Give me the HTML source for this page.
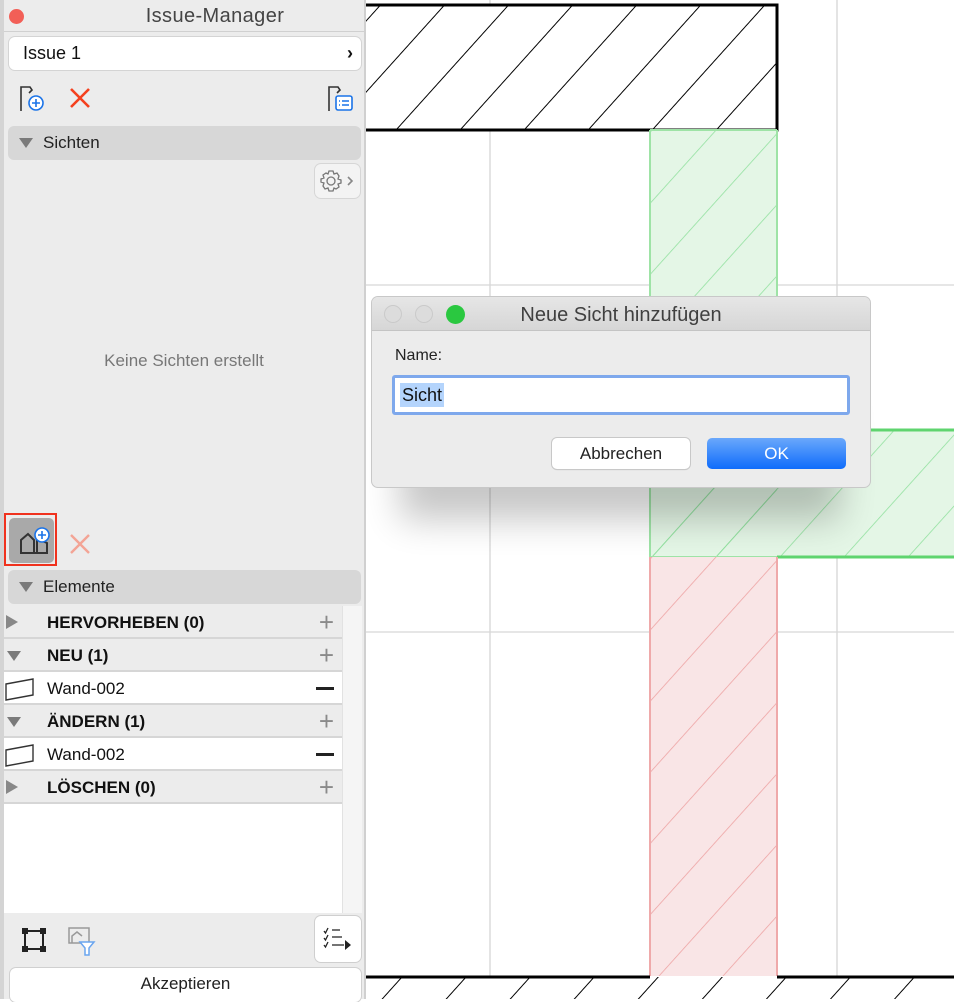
<!DOCTYPE html>
<html><head><meta charset="utf-8"><style>
*{margin:0;padding:0;box-sizing:border-box}
body{width:954px;height:999px;overflow:hidden;background:#fff;font-family:"Liberation Sans",sans-serif;position:relative}
.a{position:absolute}
.panel{left:0;top:0;width:366px;height:999px;background:#ececec;border-left:4px solid #d4d4d4;border-right:2px solid #d0d0d0}
.hdr{background:#d7d7d7;border-radius:6px;height:34px;font-size:17px;color:#222;line-height:34px}
.tri{display:inline-block;width:0;height:0;border-left:7px solid transparent;border-right:7px solid transparent;border-top:10px solid #7a7a7a}
.row{left:0;width:342px;height:33px;font-size:17px;line-height:33px;border-bottom:2px solid #d6d6d6}
.cat{background:#ececec;font-weight:bold;color:#111}
.item{background:#fff;color:#111}
.plus{position:absolute;right:12px;top:0;color:#8a8a8a;font-size:26px;font-weight:normal}
.minus{position:absolute;right:12px;top:15px;width:18px;height:2.5px;background:#222}
</style></head><body>
<svg class="a" style="left:0;top:0" width="954" height="999">
<defs>
<pattern id="pk" patternUnits="userSpaceOnUse" width="60" height="47.6" patternTransform="rotate(-48)"><line x1="0" y1="0" x2="60" y2="0" stroke="#000" stroke-width="2"/></pattern>
<pattern id="pg" patternUnits="userSpaceOnUse" width="60" height="47.6" patternTransform="rotate(-48)"><line x1="0" y1="0" x2="60" y2="0" stroke="#8ee09c" stroke-width="1.5"/></pattern>
<pattern id="pr" patternUnits="userSpaceOnUse" width="60" height="47.6" patternTransform="rotate(-48)"><line x1="0" y1="0" x2="60" y2="0" stroke="#eda0a0" stroke-width="1.5"/></pattern>
<filter id="bl" x="-20%" y="-20%" width="140%" height="160%"><feGaussianBlur stdDeviation="18"/></filter>
</defs>
<g stroke="#d6d6d6" stroke-width="1.3"><line x1="490" y1="0" x2="490" y2="976"/><line x1="837" y1="0" x2="837" y2="976"/><line x1="365" y1="285" x2="954" y2="285"/><line x1="365" y1="632" x2="954" y2="632"/></g>
<rect x="340" y="5" width="437" height="125" fill="#fff"/>
<rect x="340" y="5" width="437" height="125" fill="url(#pk)"/>
<path d="M340 5H777V130H340" fill="none" stroke="#000" stroke-width="3"/>
<rect x="650" y="130" width="127" height="427" fill="#e4f6e6"/>
<rect x="650" y="430" width="304" height="127" fill="#e4f6e6"/>
<rect x="650" y="130" width="127" height="427" fill="url(#pg)"/>
<rect x="650" y="430" width="304" height="127" fill="url(#pg)"/>
<path d="M650 130V557M777 130V430M650 130H777" stroke="#9ee3a6" stroke-width="2" fill="none"/>
<path d="M777 430H954M777 557H954" stroke="#5fd46f" stroke-width="3" fill="none"/>
<path d="M650 557H777" stroke="#9ee3a6" stroke-width="2"/>
<rect x="650" y="557" width="127" height="419" fill="#f9e5e6"/>
<rect x="650" y="557" width="127" height="419" fill="url(#pr)"/>
<path d="M650 557V976M777 557V976" stroke="#efa9aa" stroke-width="2"/>
<rect x="340" y="977" width="614" height="22" fill="url(#pk)"/>
<path d="M340 977H650M777 977H954" stroke="#000" stroke-width="3"/>
<rect x="400" y="400" width="440" height="120" fill="#000" opacity="0.22" filter="url(#bl)"/>
</svg>

<div class="a panel">
 <div class="a" style="left:0;top:0;width:360px;height:32px;border-bottom:1px solid #d0d0d0;text-align:center;font-size:20px;letter-spacing:0.4px;line-height:33px;color:#444;padding-left:62px">Issue-Manager</div>
 <div class="a" style="left:5px;top:9px;width:15px;height:15px;border-radius:50%;background:#f25f57"></div>
 <div class="a" style="left:5px;top:37px;width:352px;height:33px;background:#fff;border-radius:6px;box-shadow:0 0 0 1px #d4d4d4;font-size:18px;line-height:33px;padding-left:14px;color:#111">Issue 1<span style="position:absolute;right:8px;font-weight:bold">›</span></div>
 <svg class="a" style="left:14px;top:84px" width="32" height="28"><path d="M3 27V3H12L14 6 11 9" fill="none" stroke="#333" stroke-width="1.6"/><circle cx="18" cy="19" r="7" fill="#fff" stroke="#1a73e8" stroke-width="1.6"/><path d="M18 15V23M14 19H22" stroke="#1a73e8" stroke-width="1.6"/></svg>
 <svg class="a" style="left:64px;top:86px" width="24" height="24"><path d="M3 3L21 21M21 3L3 21" stroke="#f4401e" stroke-width="2.6"/></svg>
 <svg class="a" style="left:322px;top:84px" width="30" height="28"><path d="M3 27V3H12L14 6 11 9" fill="none" stroke="#333" stroke-width="1.6"/><rect x="10" y="12" width="16" height="14" rx="2" fill="#fff" stroke="#1a73e8" stroke-width="1.6"/><path d="M13 17H14M16 17H23M13 21H14M16 21H23" stroke="#1a73e8" stroke-width="1.5"/></svg>
 <div class="a hdr" style="left:4px;top:126px;width:353px;padding-left:11px"><span class="tri"></span><span style="margin-left:10px">Sichten</span></div>
 <div class="a" style="left:311px;top:164px;width:45px;height:34px;background:#f3f3f3;border-radius:6px;box-shadow:0 0 0 1px #d6d6d6"><svg width="45" height="34"><g transform="translate(16,17)" fill="none" stroke="#777" stroke-width="1.3"><circle r="4"/><path d="M-2-10H2L3-7 6-8 8-5 7-2 10-1V2L7 3 8 6 5 8 3 7 2 10H-2L-3 7-6 8-8 5-7 2-10 1V-2L-7-3-8-6-5-8-3-7Z"/></g><path d="M33 13L37 17 33 21" fill="none" stroke="#888" stroke-width="1.6"/></svg></div>
 <div class="a" style="left:0;top:351px;width:360px;text-align:center;font-size:17px;color:#777">Keine Sichten erstellt</div>
 <div class="a" style="left:0;top:513px;width:53px;height:53px;border:2px solid #f0321e"></div>
 <div class="a" style="left:5px;top:518px;width:45px;height:45px;background:#a9a9a9;border-radius:5px"><svg width="45" height="45"><path d="M12 35V22L19 16 25 22V35ZM12 35H38V25L28 21V35" fill="none" stroke="#333" stroke-width="2"/><circle cx="33" cy="17" r="7" fill="#fff" stroke="#1a73e8" stroke-width="1.6"/><path d="M33 13V21M29 17H37" stroke="#1a73e8" stroke-width="1.6"/></svg></div>
 <svg class="a" style="left:64px;top:532px" width="24" height="24"><path d="M3 3L21 21M21 3L3 21" stroke="#f3a495" stroke-width="2.4"/></svg>
 <div class="a hdr" style="left:4px;top:570px;width:353px;padding-left:11px"><span class="tri"></span><span style="margin-left:10px">Elemente</span></div>
 <div class="a" style="left:0;top:606px;width:342px;height:307px;background:#fff"></div>
 <div class="a row cat" style="top:606px"><svg class="a" style="left:2px;top:9px" width="12" height="14"><path d="M0 0L12 7 0 14Z" fill="#888"/></svg><span style="margin-left:43px">HERVORHEBEN (0)</span><span class="plus">+</span></div>
 <div class="a row cat" style="top:639px"><span class="tri" style="position:absolute;left:3px;top:12px"></span><span style="margin-left:43px">NEU (1)</span><span class="plus">+</span></div>
 <div class="a row item" style="top:672px"><svg class="a" style="left:1px;top:4px" width="30" height="26"><path d="M1 8L28 3V19L1 24Z" fill="none" stroke="#333" stroke-width="1.4"/></svg><span style="margin-left:43px">Wand-002</span><span class="minus"></span></div>
 <div class="a row cat" style="top:705px"><span class="tri" style="position:absolute;left:3px;top:12px"></span><span style="margin-left:43px">ÄNDERN (1)</span><span class="plus">+</span></div>
 <div class="a row item" style="top:738px"><svg class="a" style="left:1px;top:4px" width="30" height="26"><path d="M1 8L28 3V19L1 24Z" fill="none" stroke="#333" stroke-width="1.4"/></svg><span style="margin-left:43px">Wand-002</span><span class="minus"></span></div>
 <div class="a row cat" style="top:771px"><svg class="a" style="left:2px;top:9px" width="12" height="14"><path d="M0 0L12 7 0 14Z" fill="#888"/></svg><span style="margin-left:43px">LÖSCHEN (0)</span><span class="plus">+</span></div>
 <div class="a" style="left:338px;top:606px;width:20px;height:307px;background:#f5f5f5;border-left:1px solid #e2e2e2"></div>
 <svg class="a" style="left:16px;top:926px" width="28" height="28"><rect x="5" y="5" width="18" height="18" fill="none" stroke="#222" stroke-width="2"/><g fill="#222"><rect x="2" y="2" width="6" height="6"/><rect x="20" y="2" width="6" height="6"/><rect x="2" y="20" width="6" height="6"/><rect x="20" y="20" width="6" height="6"/></g></svg>
 <svg class="a" style="left:62px;top:925px" width="32" height="32"><rect x="3" y="3" width="20" height="15" fill="none" stroke="#999" stroke-width="1.5"/><path d="M6 18V11L11 7 16 11" fill="none" stroke="#999" stroke-width="1.5"/><path d="M14 17H28L23 23V30H19V23Z" fill="#fff" stroke="#6aa5ef" stroke-width="1.5"/></svg>
 <div class="a" style="left:311px;top:916px;width:46px;height:46px;background:#fff;border-radius:6px;box-shadow:0 0 0 1px #cfcfcf"><svg width="46" height="46"><g stroke="#222" stroke-width="1.3" fill="none"><path d="M9 15L10.5 17 13 12M9 22L10.5 24 13 19M9 29L10.5 31 13 26"/><path d="M17 14H25M17 21H27M17 29H29"/></g><path d="M30 24L36 29 30 34Z" fill="#222"/></svg></div>
 <div class="a" style="left:6px;top:968px;width:351px;height:34px;background:#fff;border-radius:6px;box-shadow:0 0 0 1px #d0d0d0;text-align:center;font-size:17px;line-height:32px;color:#222">Akzeptieren</div>
</div>

<div class="a" style="left:372px;top:297px;width:498px;height:190px;background:#ececec;border-radius:6px;box-shadow:0 0 0 1px #c8c8c8;overflow:hidden">
 <div class="a" style="left:0;top:0;width:498px;height:34px;background:linear-gradient(#e6e6e6,#d6d6d6);border-bottom:1px solid #c4c4c4;text-align:center;font-size:20px;line-height:36px;color:#404040">Neue Sicht hinzufügen</div>
 <div class="a" style="left:12px;top:8px;width:18px;height:18px;border-radius:50%;background:#dcdcdc;border:1px solid #cacaca"></div>
 <div class="a" style="left:43px;top:8px;width:18px;height:18px;border-radius:50%;background:#dcdcdc;border:1px solid #cacaca"></div>
 <div class="a" style="left:74px;top:8px;width:19px;height:19px;border-radius:50%;background:#2ac840"></div>
 <div class="a" style="left:23px;top:50px;font-size:16px;color:#222">Name:</div>
 <div class="a" style="left:20px;top:78px;width:458px;height:40px;border:3px solid #7ea8ec;border-radius:3px;background:#fff"></div>
 <div class="a" style="left:28px;top:86px;height:24px;background:#b4d4fc;font-size:18px;line-height:24px;padding:0 2px;color:#111">Sicht</div>
 <div class="a" style="left:180px;top:141px;width:138px;height:31px;background:#fff;border-radius:5px;box-shadow:0 0 0 1px #c8c8c8,0 1px 1px rgba(0,0,0,.15);text-align:center;font-size:17px;line-height:31px;color:#222">Abbrechen</div>
 <div class="a" style="left:335px;top:141px;width:139px;height:31px;background:linear-gradient(#6aa8fb,#0f6cfb);border-radius:5px;text-align:center;font-size:17px;line-height:31px;color:#fff">OK</div>
</div>
</body></html>
